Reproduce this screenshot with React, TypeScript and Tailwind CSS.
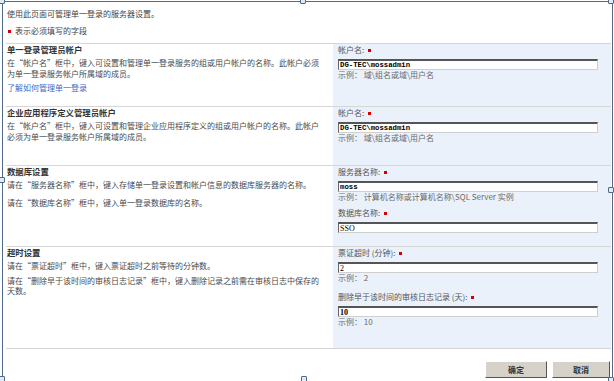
import React from "react";

const font = { fontFamily: '"Noto Sans CJK SC", "Noto Sans", sans-serif' };

function Req() {
  return <span className="inline-block w-[3px] h-[3px] bg-[#d40000] ml-[4px] align-middle" />;
}

function Field({ label, value, mono, bold, mt }: { label: string; value: string; mono?: boolean; bold?: boolean; mt?: string }) {
  return (
    <div className={mt ?? ""}>
      <div className="h-[8px] leading-[8px] text-[8px] text-[#555] flex items-center">
        {label}
        <Req />
      </div>
      <input
        readOnly
        value={value}
        className={`mt-[5px] block h-[11px] w-[260px] bg-white px-[1px] py-0 leading-[7px] text-black outline-none border border-t-2 border-t-[#555] border-l-[#666] border-r-[#cfcfcf] border-b-[#cfcfcf] ${bold ? "font-bold" : ""} ${mono ? "text-[7.3px]" : "text-[8px]"}`}
        style={{ fontFamily: mono ? '"Liberation Mono", monospace' : '"Liberation Serif", serif' }}
      />
    </div>
  );
}

function Example({ text }: { text: string }) {
  return <div className="h-[10px] leading-[10px] text-[8px] text-[#6a6a6a]">{text}</div>;
}

function Heading({ text }: { text: string }) {
  return <div className="h-[10px] leading-[10px] text-[8.4px] font-bold text-[#333]">{text}</div>;
}

function Handle({ cls }: { cls: string }) {
  return <div className={`absolute w-[6px] h-[6px] bg-[#dfeaf6] border border-[#4d6a88] rounded-[1px] ${cls}`} />;
}

export default function App() {
  return (
    <div className="relative w-[614px] h-[381px] overflow-hidden bg-white text-[#4a4a4a]" style={font}>
      <div className="pl-[7px] pt-[8px]">
        <div className="h-[12px] leading-[12px] text-[8px] text-[#444]">使用此页面可管理单一登录的服务器设置。</div>
        <div className="mt-[5px] h-[12px] flex items-center text-[8px] text-[#444]">
          <span className="inline-block w-[3px] h-[3px] bg-[#d40000] ml-[1px] mr-[4px]" />
          表示必须填写的字段
        </div>
      </div>

      <div className="ml-[6px] mt-[6px] w-[605px] border-b border-[#d6d6d6]">
        {/* Row 1 */}
        <div className="grid grid-cols-[327px_278px] h-[63px] border-t border-[#d6d6d6]">
          <div className="pl-[1px]">
            <Heading text="单一登录管理员帐户" />
            <div className="mt-[3px] text-[8px] leading-[11px] text-[#4a4a4a]">
              在“帐户名”框中，键入可设置和管理单一登录服务的组或用户帐户的名称。此帐户必须
              <br />
              为单一登录服务帐户所属域的成员。
            </div>
            <div className="mt-[3px] text-[8px] leading-[11px] text-[#3b6bc6]">了解如何管理单一登录</div>
          </div>
          <div className="bg-[#eaf1fa] pl-[5px] pt-[2px]">
            <Field label="帐户名:" value="DG-TEC\mossadmin" mono bold />
            <Example text="示例： 域\组名或域\用户名" />
          </div>
        </div>

        {/* Row 2 */}
        <div className="grid grid-cols-[327px_278px] h-[59px] border-t border-[#d6d6d6]">
          <div className="pl-[1px]">
            <Heading text="企业应用程序定义管理员帐户" />
            <div className="mt-[3px] text-[8px] leading-[11px] text-[#4a4a4a]">
              在“帐户名”框中，键入可设置和管理企业应用程序定义的组或用户帐户的名称。此帐户
              <br />
              必须为单一登录服务帐户所属域的成员。
            </div>
          </div>
          <div className="bg-[#eaf1fa] pl-[5px] pt-[2px]">
            <Field label="帐户名:" value="DG-TEC\mossadmin" mono bold />
            <Example text="示例： 域\组名或域\用户名" />
          </div>
        </div>

        {/* Row 3 */}
        <div className="grid grid-cols-[327px_278px] h-[81px] border-t border-[#d6d6d6]">
          <div className="pl-[1px]">
            <Heading text="数据库设置" />
            <div className="mt-[3px] text-[8px] leading-[11px] text-[#4a4a4a]">
              请在“服务器名称”框中，键入存储单一登录设置和帐户信息的数据库服务器的名称。
            </div>
            <div className="mt-[7px] text-[8px] leading-[11px] text-[#4a4a4a]">请在“数据库名称”框中，键入单一登录数据库的名称。</div>
          </div>
          <div className="bg-[#eaf1fa] pl-[5px] pt-[2px]">
            <Field label="服务器名称:" value="moss" mono bold />
            <Example text="示例： 计算机名称或计算机名称\SQL Server 实例" />
            <Field label="数据库名称:" value="SSO" mt="mt-[7px]" />
          </div>
        </div>

        {/* Row 4 */}
        <div className="grid grid-cols-[327px_278px] h-[102px] border-t border-[#d6d6d6]">
          <div className="pl-[1px]">
            <Heading text="超时设置" />
            <div className="mt-[3px] text-[8px] leading-[11px] text-[#4a4a4a]">请在“票证超时”框中，键入票证超时之前等待的分钟数。</div>
            <div className="mt-[5px] text-[8px] leading-[10px] text-[#4a4a4a]">
              请在“删除早于该时间的审核日志记录”框中，键入删除记录之前需在审核日志中保存的
              <br />
              天数。
            </div>
          </div>
          <div className="bg-[#eaf1fa] pl-[5px] pt-[2px]">
            <Field label="票证超时 (分钟):" value="2" />
            <Example text="示例： 2" />
            <Field label="删除早于该时间的审核日志记录 (天):" value="10" bold mt="mt-[10px]" />
            <Example text="示例： 10" />
          </div>
        </div>
      </div>

      <div className="mt-[12px] flex justify-end gap-[5px] pr-[4px]">
        <button className="w-[62px] h-[17px] bg-[#d6d2ca] border border-t-white border-l-white border-r-[#555] border-b-[#555] text-[8px] font-bold text-[#333] leading-none">
          确定
        </button>
        <button className="w-[58px] h-[17px] bg-[#d6d2ca] border border-t-white border-l-white border-r-[#555] border-b-[#555] text-[8px] font-bold text-[#333] leading-none">
          取消
        </button>
      </div>

      {/* selection frame overlay */}
      <div className="pointer-events-none absolute left-[2px] top-[1px] w-[611px] h-[390px] border border-[#4d6a88]" />
      <Handle cls="left-[-1px] top-[-2px]" />
      <Handle cls="left-[300px] top-[-2px]" />
      <Handle cls="left-[608px] top-[-2px]" />
      <Handle cls="left-[-1px] top-[177px]" />
      <Handle cls="left-[608px] top-[187px]" />
      <Handle cls="left-[-1px] top-[376px]" />
      <Handle cls="left-[301px] top-[376px]" />
      <Handle cls="left-[608px] top-[377px]" />
    </div>
  );
}
